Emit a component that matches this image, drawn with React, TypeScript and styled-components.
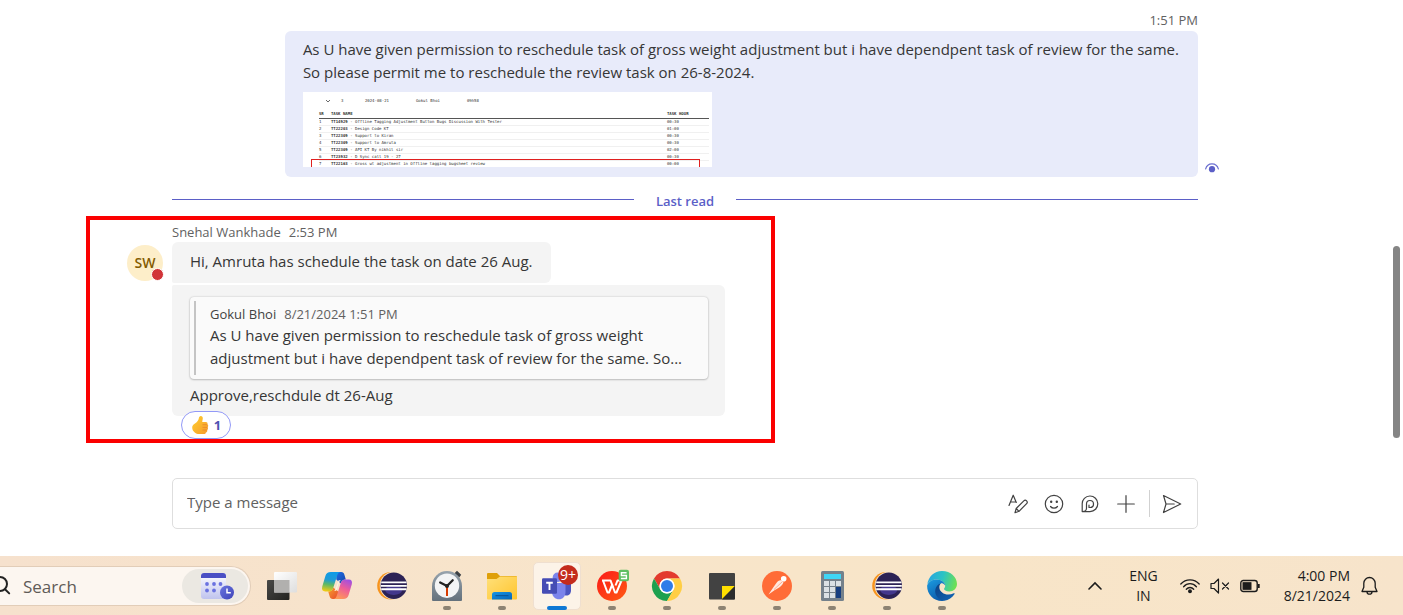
import React from "react";
import styled, { createGlobalStyle } from "styled-components";

const GlobalStyle = createGlobalStyle`
  * { box-sizing: border-box; }
  body {
    margin: 0;
    background: #fff;
    color: #363636;
    font-family: "Open Sans", "Noto Sans", sans-serif;
    font-size: 15px;
    line-height: 23px;
  }
  button, input { font: inherit; color: inherit; }
  p { margin: 0; }
`;

const Page = styled.div`
  min-height: 100vh;
  display: flex;
  flex-direction: column;
`;

const ChatArea = styled.main`
  flex: 1;
  display: flex;
`;

const Conversation = styled.div`
  flex: 1;
  min-width: 0;
  display: flex;
  flex-direction: column;
  padding: 10px 188px 27px 172px;
`;

const ScrollGutter = styled.div`
  width: 17px;
  padding: 246px 3px 0 7px;
`;

const ScrollThumb = styled.div`
  height: 192px;
  border-radius: 4px;
  background: #858585;
`;

const Meta = styled.div<{ $end?: boolean }>`
  display: flex;
  gap: 8px;
  justify-content: ${(p) => (p.$end ? "flex-end" : "flex-start")};
  font-size: 13px;
  line-height: 20px;
  color: #616161;
`;

const Author = styled.span<{ $strong?: boolean }>`
  color: ${(p) => (p.$strong ? "#424242" : "#616161")};
`;

const SentRow = styled.div`
  display: flex;
  justify-content: flex-end;
  align-items: flex-end;
  gap: 7px;
  margin: 1px -21px 0 0;
`;

const SentBubble = styled.article`
  flex: 0 0 calc((100% - 21px) * 0.89);
  padding: 7px 18px 10px;
  border-radius: 6px;
  background: #e8ebfa;
`;

const SeenMark = styled.span`
  display: flex;
  padding-bottom: 4px;
`;

const Snapshot = styled.figure`
  position: relative;
  width: 409px;
  max-width: 100%;
  height: 75px;
  margin: 8px 0 0;
  padding: 6px 3px 0 16px;
  overflow: hidden;
  background: #fff;
  color: #333;
  font-family: "DejaVu Sans Mono", monospace;
  font-size: 4px;
  line-height: 6px;
`;

const SnapshotHead = styled.div`
  display: grid;
  grid-template-columns: 16px 24px 51px 51px 1fr;
  height: 12px;
  padding-left: 6px;
`;

const TaskTable = styled.table`
  width: 100%;
  border-collapse: collapse;
  table-layout: fixed;
  th, td {
    height: 7px;
    padding: 0;
    text-align: left;
    white-space: nowrap;
    border-bottom: 1px solid #f0f0f0;
  }
  th { height: 8px; border-bottom-color: #555; }
  th:first-child { width: 12px; }
  th:last-child { width: 42px; }
`;

const MarkedRow = styled.div`
  position: absolute;
  left: 8px;
  right: 12px;
  top: 67px;
  height: 12px;
  border: 1px solid #e02020;
`;

const LastRead = styled.div`
  display: flex;
  align-items: center;
  gap: 22px;
  height: 20px;
  margin: 14px 0 5px;
  color: #5b5fc7;
  font-size: 13px;
  font-weight: 600;
  line-height: 20px;
  &::before, &::after {
    content: "";
    flex: 1;
    height: 1px;
    margin-bottom: 4px;
    background: #5b5fc7;
  }
`;

const Highlighted = styled.section`
  display: flex;
  align-items: flex-start;
  gap: 9px;
  width: 689px;
  margin-left: -86px;
  padding: 2px 46px 0 37px;
  border: 4px solid #fb0000;
`;

const Avatar = styled.div`
  position: relative;
  flex: none;
  width: 36px;
  height: 36px;
  margin-top: 23px;
  border-radius: 50%;
  background: #fdeec9;
  color: #835b00;
  font-size: 14px;
  font-weight: 600;
  line-height: 36px;
  text-align: center;
`;

const Presence = styled.span`
  position: absolute;
  right: -1px;
  bottom: 0;
  width: 13px;
  height: 13px;
  border: 1px solid #fff;
  border-radius: 50%;
  background: #d13438;
`;

const Received = styled.div`
  flex: 1;
  display: flex;
  flex-direction: column;
  align-items: flex-start;
`;

const Bubble = styled.article<{ $follow?: boolean }>`
  align-self: ${(p) => (p.$follow ? "stretch" : "flex-start")};
  margin-top: ${(p) => (p.$follow ? "2px" : "0")};
  padding: ${(p) => (p.$follow ? "12px 17px 9px 18px" : "8px 18px 10px")};
  border-radius: ${(p) => (p.$follow ? "2px 6px 6px 6px" : "6px 6px 6px 2px")};
  background: #f4f4f4;
`;

const Quote = styled.blockquote`
  display: flex;
  gap: 14px;
  margin: 0 0 5px;
  padding: 4px;
  border-radius: 4px;
  background: #fafafa;
  box-shadow: 0 0 2px rgba(0, 0, 0, 0.22), 0 1px 2px rgba(0, 0, 0, 0.18);
  &::before {
    content: "";
    width: 2px;
    flex: none;
    background: #c4c4c4;
  }
`;

const QuoteBody = styled.div`
  padding: 3px 0 5px;
`;

const Reaction = styled.button`
  display: flex;
  align-items: center;
  justify-content: center;
  gap: 5px;
  width: 50px;
  height: 28px;
  margin: -5px 0 0 9px;
  padding: 0;
  border: 1px solid #9299f7;
  border-radius: 14px;
  background: #fff;
  color: #4f52b2;
  font-size: 13px;
  font-weight: 700;
  line-height: 20px;
`;

const Compose = styled.form`
  display: flex;
  align-items: center;
  height: 51px;
  margin-top: auto;
  padding: 0 15px 0 14px;
  border: 1px solid #dedede;
  border-radius: 5px;
`;

const MessageInput = styled.input`
  flex: 1;
  min-width: 0;
  padding: 0 0 2px;
  border: 0;
  outline: 0;
  background: none;
  &::placeholder { color: #616161; opacity: 1; }
`;

const Tools = styled.div`
  display: flex;
  gap: 16px;
`;

const ToolButton = styled.button`
  display: flex;
  padding: 0;
  border: 0;
  background: none;
  color: #424242;
`;

const Divider = styled.span`
  width: 1px;
  height: 27px;
  margin: 0 12px 0 13px;
  background: #d1d1d1;
`;

const Taskbar = styled.footer`
  display: flex;
  align-items: center;
  height: 59px;
  padding-right: 25px;
  background: linear-gradient(90deg, #f6e1cd 0%, #f8e5ca 45%, #f8e5c8 70%, #f7e4cb 100%);
  color: #1c1c1c;
`;

const SearchBox = styled.div`
  display: flex;
  align-items: center;
  width: 251px;
  height: 40px;
  padding-right: 2px;
  border: 1px solid #e2cdb8;
  border-left: 0;
  border-radius: 0 20px 20px 0;
  background: #fcf6f0;
`;

const SearchInput = styled.input`
  flex: 1;
  min-width: 0;
  padding: 2px 0 0 11px;
  border: 0;
  outline: 0;
  background: none;
  font-size: 17px;
  &::placeholder { color: #5f5b57; opacity: 1; }
`;

const CalendarButton = styled.button`
  display: flex;
  justify-content: center;
  align-items: center;
  width: 66px;
  height: 34px;
  padding: 0;
  border: 0;
  border-radius: 17px;
  background: #ebe8e2;
`;

const Apps = styled.nav`
  display: flex;
  gap: 7px;
  margin-left: 7px;
`;

const AppButton = styled.button<{ $active?: boolean }>`
  position: relative;
  display: flex;
  align-items: center;
  justify-content: center;
  width: 48px;
  height: 48px;
  padding: 0;
  border: 1px solid ${(p) => (p.$active ? "#efdfd0" : "transparent")};
  border-radius: 5px;
  background: ${(p) => (p.$active ? "#fcf3e8" : "none")};
  svg { overflow: visible; }
`;

const Running = styled.span<{ $active?: boolean }>`
  position: absolute;
  bottom: -1px;
  width: ${(p) => (p.$active ? "20px" : "8px")};
  height: 4px;
  border-radius: 2px;
  background: ${(p) => (p.$active ? "#0f78d4" : "#8d8373")};
`;

const Badge = styled.span`
  position: absolute;
  top: 2px;
  right: 2px;
  width: 20px;
  height: 20px;
  border-radius: 50%;
  background: #c42b1c;
  color: #fff;
  font-size: 14px;
  line-height: 19px;
  text-align: center;
`;

const Tray = styled.div`
  display: flex;
  align-items: center;
  margin-left: auto;
  font-size: 14px;
  line-height: 20px;
`;

const TrayButton = styled.button<{ $gap?: number; $right?: boolean }>`
  display: flex;
  flex-direction: column;
  align-items: ${(p) => (p.$right ? "flex-end" : "center")};
  margin-left: ${(p) => p.$gap ?? 0}px;
  padding: 0;
  border: 0;
  background: none;
  white-space: nowrap;
`;

const AppSvg = ({ children }: { children: React.ReactNode }) => (
  <svg width="30" height="30" viewBox="0 0 30 30" aria-hidden="true">{children}</svg>
);

const TaskViewIcon = () => (
  <AppSvg>
    <defs>
      <linearGradient id="tv1" x1="0" y1="0" x2="1" y2="1"><stop stopColor="#4a4a48" /><stop offset="1" stopColor="#22221f" /></linearGradient>
      <linearGradient id="tv2" x1="0" y1="0" x2="1" y2="1"><stop stopColor="#fff" /><stop offset="1" stopColor="#dedede" /></linearGradient>
    </defs>
    <rect x="0" y="9" width="22.5" height="20" rx="1" fill="url(#tv1)" />
    <rect x="7" y="1" width="23" height="20.5" rx="1" fill="url(#tv2)" />
    <rect x="7" y="9" width="15.5" height="12.5" fill="#b1b0ae" />
  </AppSvg>
);

const CopilotIcon = () => (
  <AppSvg>
    <defs>
      <linearGradient id="cp1" x1=".5" y1="0" x2=".35" y2="1"><stop stopColor="#0f9be8" /><stop offset=".4" stopColor="#1f9bd6" /><stop offset=".65" stopColor="#5db865" /><stop offset="1" stopColor="#f2cb13" /></linearGradient>
      <linearGradient id="cp2" x1=".75" y1="0" x2=".3" y2="1"><stop stopColor="#a24fe0" /><stop offset=".45" stopColor="#ee5d98" /><stop offset="1" stopColor="#ff9a55" /></linearGradient>
      <linearGradient id="cp3" x1="0" y1="0" x2="1" y2="1"><stop stopColor="#1c6ee6" /><stop offset="1" stopColor="#1643a8" /></linearGradient>
      <linearGradient id="cp4" x1="0" y1="0" x2="1" y2="1"><stop stopColor="#f6a12c" /><stop offset="1" stopColor="#e8482e" /></linearGradient>
    </defs>
    <path d="M14 1h5.200c1.800 0 2.700 1 3.200 2.700L23.800 8.600c-2.800 0-4.300 1.200-5 4l-4.500-4z" fill="url(#cp3)" />
    <path d="M16.500 28h-5.700c-1.800 0-2.700-1-3.200-2.700L6.200 20.400c2.800 0 4.300-1.200 5-4l5 4z" fill="url(#cp4)" />
    <path d="M8.800 1h9.500c-1.800.3-2.600 1.700-3.300 3.900l-3.700 11.800c-.9 2.700-2.300 3.800-4.900 3.800H3.200C.6 20.500-.5 18.600.2 15.800L3.300 5.200C4.200 2.200 5.800 1 8.800 1z" fill="url(#cp1)" />
    <path d="M21.200 28h-9.500c1.800-.3 2.600-1.700 3.300-3.900l3.700-11.800c.9-2.700 2.300-3.800 4.900-3.800h3.200c2.600 0 3.700 1.900 3 4.700l-3.100 10.600c-.9 3-2.500 4.200-5.500 4.200z" fill="url(#cp2)" />
    <path d="M16.600 9.200h2.200c-1.200.7-1.800 2-2.300 3.600l-2.300 7h-2c1-.7 1.500-1.800 2-3.200z" fill="#fff3e4" />
  </AppSvg>
);

const EclipseIcon = () => (
  <AppSvg>
    <circle cx="14" cy="14.700" r="13.800" fill="#f7941e" />
    <circle cx="16.600" cy="14.700" r="13.900" fill="#f8e5ca" />
    <circle cx="16.800" cy="14.700" r="13.200" fill="#2c2255" />
    <ellipse cx="16.700" cy="19" rx="8.500" ry="5" fill="#43378c" />
    <path d="M4.200 11.400h25.300M3.800 14.900h26M4.200 18.300h25.300" stroke="#fff" strokeWidth="1.900" />
  </AppSvg>
);

const ClockIcon = () => (
  <AppSvg>
    <defs><linearGradient id="ck" x1="0" y1="0" x2="0" y2="1"><stop stopColor="#97a3ad" /><stop offset="1" stopColor="#64717c" /></linearGradient></defs>
    <path d="M22.500 2.200l2.500-2.400 4.200 4-2 2.700z" fill="#3b4045" />
    <path d="M0 15a15 15 0 0 1 30 0v14a1 1 0 0 1-1 1H1a1 1 0 0 1-1-1z" fill="url(#ck)" />
    <circle cx="15" cy="14.700" r="12.200" fill="#f3f4f5" />
    <path d="M15 15L8.200 11.500M15 15l5.700-5.700" stroke="#222" strokeWidth="2.300" strokeLinecap="round" />
    <path d="M15 16v9" stroke="#d83b01" strokeWidth="2" />
    <circle cx="15" cy="15" r="2" fill="#222" />
  </AppSvg>
);

const FolderIcon = () => (
  <AppSvg>
    <defs>
      <linearGradient id="fd1" x1="0" y1="0" x2="1" y2="1"><stop stopColor="#ffe07a" /><stop offset="1" stopColor="#ffc52e" /></linearGradient>
      <linearGradient id="fd2" x1="0" y1="0" x2="1" y2="1"><stop stopColor="#1595e3" /><stop offset="1" stopColor="#0665b8" /></linearGradient>
    </defs>
    <path d="M0 3a1 1 0 0 1 1-1h9l3 3h16a1 1 0 0 1 1 1v6H0z" fill="#dfa009" />
    <path d="M0 8h9.500L13 5.500h17V27.500a1 1 0 0 1-1 1H1a1 1 0 0 1-1-1z" fill="url(#fd1)" />
    <path d="M5 28.500V23.500a2.500 2.500 0 0 1 2.500-2.500h15a2.500 2.500 0 0 1 2.500 2.500v5z" fill="url(#fd2)" />
    <path d="M8.500 24.700h13" stroke="#0a4f8f" strokeWidth="1" />
  </AppSvg>
);

const TeamsIcon = () => (
  <AppSvg>
    <circle cx="25" cy="6" r="3.500" fill="#5059c9" />
    <path d="M20 11h9v8.500c0 3-2 5-4.500 5S20 22.500 20 19.500z" fill="#4c55c0" />
    <circle cx="15.500" cy="6.300" r="4.800" fill="#7b83eb" />
    <path d="M10 12h13.500v9c0 4.500-2.800 7.300-6.500 7.300S10 25.500 10 21z" fill="#7b83eb" />
    <rect x="0" y="7.300" width="15" height="15.500" rx="1.200" fill="#454cb5" />
    <path d="M4.200 11.700h6.600M7.500 11.700v7.300" stroke="#fff" strokeWidth="1.900" />
  </AppSvg>
);

const WpsIcon = () => (
  <AppSvg>
    <defs><linearGradient id="wp" x1="0" y1="0" x2="1" y2="1"><stop stopColor="#fb1a1a" /><stop offset="1" stopColor="#ff5a12" /></linearGradient></defs>
    <circle cx="15" cy="15" r="15" fill="url(#wp)" />
    <path d="M5 9.500h8.500l3 7.500M6 9.500l4.500 12h1.500L15.500 13M13.500 9.500L18 21.500h1.500L24.500 9.500h-4l-2 5" fill="none" stroke="#fff" strokeWidth="2" strokeLinejoin="round" />
    <rect x="21.700" y="-1.300" width="10.300" height="11.500" rx="2" fill="#5fbf62" />
    <path d="M29.600 1.700h-5.200v2.800h5v3h-5.500" fill="none" stroke="#fff" strokeWidth="1.400" />
  </AppSvg>
);

const ChromeIcon = () => (
  <AppSvg>
    <path d="M2 7.500A15 15 0 0 1 28 7.500H15A7.500 7.500 0 0 0 8.500 18.700z" fill="#e33b2e" />
    <path d="M2 7.500L8.500 18.700a7.500 7.500 0 0 0 13 0L15 30A15 15 0 0 1 2 7.500z" fill="#1da04f" />
    <path d="M15 7.500h13A15 15 0 0 1 15 30l6.500-11.200A7.500 7.500 0 0 0 15 7.500z" fill="#ffce44" />
    <circle cx="15" cy="15" r="7.600" fill="#fff" />
    <circle cx="15" cy="15" r="6" fill="#2f7ce8" />
  </AppSvg>
);

const StickyIcon = () => (
  <AppSvg>
    <rect x="2" y="2" width="26" height="26.500" rx="1" fill="#424242" />
    <path d="M15 15h13L15 28z" fill="#ffdf00" />
    <path d="M28 15v12.500a1 1 0 0 1-1 1H15z" fill="#2c2c2c" />
  </AppSvg>
);

const PostmanIcon = () => (
  <AppSvg>
    <circle cx="15" cy="15" r="15" fill="#ff6c37" />
    <circle cx="21.700" cy="7.700" r="2.800" fill="#fff" />
    <path d="M19.700 9.500c-2-.7-4 .6-5.500 2.700l-3 4.200L6.500 23.500 12.500 19.300l4.800-2.800c2.600-1.800 4.200-4.200 4.200-5.700z" fill="#ffe9e0" />
    <path d="M20.500 10.500L12 18.500" stroke="#ff9c78" strokeWidth=".8" />
  </AppSvg>
);

const CalculatorIcon = () => (
  <AppSvg>
    <rect x="4" y="0" width="23" height="30" rx="1.500" fill="#75818b" />
    <rect x="7" y="3" width="17" height="5" fill="#3fd5f5" />
    {[10, 16, 22].map((y) => [7, 13, 19].map((x) => <rect key={x + "-" + y} x={x} y={y} width="5" height="5" fill="#dbe1e5" />))}
    <rect x="19" y="16" width="5" height="11" fill="#173f80" />
  </AppSvg>
);

const EdgeIcon = () => (
  <AppSvg>
    <defs>
      <linearGradient id="ed1" x1="0" y1=".3" x2="1" y2=".5"><stop stopColor="#2aa5e0" /><stop offset=".5" stopColor="#2cc3c4" /><stop offset="1" stopColor="#6fe052" /></linearGradient>
      <linearGradient id="ed2" x1="0" y1="0" x2=".5" y2="1"><stop stopColor="#1b9de2" /><stop offset="1" stopColor="#0c5cab" /></linearGradient>
      <linearGradient id="ed3" x1="0" y1="0" x2="1" y2="1"><stop stopColor="#0a3f82" /><stop offset="1" stopColor="#1267b8" /></linearGradient>
    </defs>
    <path d="M.3 13.500C1.200 5.800 7.300 0 15 0c8.800 0 15 6.200 15 13 0 4.500-3.500 7.400-7.700 7.400-3.300 0-5.300-1.300-5.300-2.400 0-.8 1.200-1.400 1.200-3.300C18.200 11.300 14 8.500 9.500 8.500 5 8.500 1.500 11 .3 13.500z" fill="url(#ed1)" />
    <path d="M.1 14.700C1.300 10.500 5.200 8.500 9.500 8.500c4.800 0 8.500 2.800 8.700 6-1-1.600-2.500-2.200-4.200-2.200-3 2.400-4.500 6-3.700 10 .6 3.600 3.600 6.400 7 7.500C7.500 31 0 24 .1 14.700z" fill="url(#ed2)" />
    <path d="M14 12.300c-4.500 1.400-6.500 6-5.500 10.200 1 4 4.700 7.300 8.800 7.300 4.300-.8 8-3.300 10.300-6.800.3-.6-.2-1-.8-.7-7 3.100-14-.3-14.400-5.600-.2-2 .5-3.600 1.600-4.400z" fill="url(#ed3)" />
  </AppSvg>
);

const apps = [
  { name: "Task view", Icon: TaskViewIcon, running: false },
  { name: "Copilot", Icon: CopilotIcon, running: false },
  { name: "Eclipse", Icon: EclipseIcon, running: false },
  { name: "Clock", Icon: ClockIcon, running: true },
  { name: "File Explorer", Icon: FolderIcon, running: true },
  { name: "Teams", Icon: TeamsIcon, running: true, active: true, badge: "9+" },
  { name: "WPS Office", Icon: WpsIcon, running: true },
  { name: "Chrome", Icon: ChromeIcon, running: true },
  { name: "Sticky Notes", Icon: StickyIcon, running: true },
  { name: "Postman", Icon: PostmanIcon, running: true },
  { name: "Calculator", Icon: CalculatorIcon, running: true },
  { name: "Eclipse workspace", Icon: EclipseIcon, running: true },
  { name: "Edge", Icon: EdgeIcon, running: true },
];

const tasks = [
  ["TT14929", "Offline Tagging Adjustment Button Bugs Discussion With Tester", "00:30"],
  ["TT22203", "Design Code KT", "01:00"],
  ["TT22309", "Support to Kiran", "00:30"],
  ["TT22309", "Support to Amruta", "00:30"],
  ["TT22309", "API KT By nikhil sir", "02:00"],
  ["TT23932", "D Sync call 19 - 27", "00:30"],
  ["TT22163", "Gross wt adjustment in Offline tagging bugsheet review", "00:00"],
];

const ThumbIcon = () => (
  <svg width="18" height="20" viewBox="0 0 18 20" aria-hidden="true">
    <defs><linearGradient id="th" x1="0" y1="0" x2="1" y2="1"><stop stopColor="#ffd02e" /><stop offset="1" stopColor="#f59a2c" /></linearGradient></defs>
    <path d="M9.200 1.200c1.500-.5 2.800.6 2.600 2.400L11.200 7h3.600c1.500 0 2.200 1.200 1.600 2.300 1.100.7 1.100 2.200.2 2.900.7.900.5 2.100-.4 2.700.4 1.100-.2 2.200-1.300 2.500-.1 1.100-1 1.600-2.200 1.600H8.200c-2 0-3.200-.5-4.200-1.300C2.200 16.400 1.200 14.800 1.200 12.600c0-2 1.100-3.300 2.800-4.200C6.500 7 7.700 5.100 8 2.600c.1-.8.500-1.200 1.200-1.400z" fill="url(#th)" />
    <path d="M11.500 9.700h4.800M11.500 12.400h5M11.500 15h4.300" stroke="#e57f2a" strokeWidth=".7" />
  </svg>
);

const LineSvg = ({ children }: { children: React.ReactNode }) => (
  <svg width="20" height="20" viewBox="0 0 20 20" fill="none" stroke="currentColor" strokeWidth="1.200" strokeLinecap="round" strokeLinejoin="round" aria-hidden="true">{children}</svg>
);

export default function App() {
  return (
    <Page>
      <GlobalStyle />
      <ChatArea>
        <Conversation>
          <Meta $end><time>1:51 PM</time></Meta>
          <SentRow>
            <SentBubble>
              <p>As U have given permission to reschedule task of gross weight adjustment but i have dependpent task of review for the same.</p>
              <p>So please permit me to reschedule the review task on 26-8-2024.</p>
              <Snapshot>
                <SnapshotHead>
                  <svg width="6" height="6" viewBox="0 0 6 6" aria-hidden="true"><path d="M1 2l2 2 2-2" fill="none" stroke="#444" strokeWidth=".8" /></svg>
                  <span>3</span><span>2024-08-21</span><span>Gokul Bhoi</span><span>09h58</span>
                </SnapshotHead>
                <TaskTable>
                  <thead><tr><th>SR</th><th>TASK NAME</th><th>TASK HOUR</th></tr></thead>
                  <tbody>
                    {tasks.map(([id, name, hours], i) => (
                      <tr key={i}><td>{i + 1}</td><td><b>{id}</b> - {name}</td><td>{hours}</td></tr>
                    ))}
                  </tbody>
                </TaskTable>
                <MarkedRow />
              </Snapshot>
            </SentBubble>
            <SeenMark>
              <svg width="14" height="10" viewBox="0 0 14 10" role="img" aria-label="Seen">
                <path d="M.6 6C1.500 2.700 4 .9 7 .9S12.500 2.700 13.400 6" fill="none" stroke="#6a6ed0" strokeWidth="1.100" strokeLinecap="round" />
                <circle cx="7" cy="6.200" r="3.100" fill="#5b5fc7" />
              </svg>
            </SeenMark>
          </SentRow>
          <LastRead>Last read</LastRead>
          <Highlighted>
            <Avatar>SW<Presence /></Avatar>
            <Received>
              <Meta><Author>Snehal Wankhade</Author><time>2:53 PM</time></Meta>
              <Bubble><p>Hi, Amruta has schedule the task on date 26 Aug.</p></Bubble>
              <Bubble $follow>
                <Quote>
                  <QuoteBody>
                    <Meta><Author $strong>Gokul Bhoi</Author><time>8/21/2024 1:51 PM</time></Meta>
                    <p>As U have given permission to reschedule task of gross weight adjustment but i have dependpent task of review for the same. So...</p>
                  </QuoteBody>
                </Quote>
                <p>Approve,reschdule dt 26-Aug</p>
              </Bubble>
              <Reaction type="button" aria-label="1 like"><ThumbIcon />1</Reaction>
            </Received>
          </Highlighted>
          <Compose>
            <MessageInput aria-label="Type a message" placeholder="Type a message" />
            <Tools>
              <ToolButton type="button" aria-label="Format">
                <LineSvg><path d="M1 11.500L5.200 1.200 8.300 8.500M2.600 8h5M7 18.700l1.200-4.200 7.600-7.600a1.900 1.900 0 0 1 2.800 2.800L11 17.300 7 18.700zM8.200 14.500L11 17.300" /></LineSvg>
              </ToolButton>
              <ToolButton type="button" aria-label="Emoji">
                <LineSvg><circle cx="10" cy="10" r="8.700" /><path d="M6.500 12.500c1.800 2.200 5.200 2.200 7 0" /><circle cx="7.200" cy="7.800" r=".6" fill="currentColor" /><circle cx="12.800" cy="7.800" r=".6" fill="currentColor" /></LineSvg>
              </ToolButton>
              <ToolButton type="button" aria-label="Loop components">
                <LineSvg><path d="M2.200 17.600V10A7.800 7.800 0 1 1 10 17.600zM2.500 17.500c3 0 4-1.200 4-3.500V10a3.500 3.500 0 1 1 3.700 3.500H9V11" /></LineSvg>
              </ToolButton>
              <ToolButton type="button" aria-label="More actions">
                <LineSvg><path d="M10 1.700v16.600M1.700 10h16.600" /></LineSvg>
              </ToolButton>
            </Tools>
            <Divider />
            <ToolButton type="submit" aria-label="Send">
              <LineSvg><path d="M1.500 1.500L18.700 10 1.500 18.500 4 10zM4.200 10h8" /></LineSvg>
            </ToolButton>
          </Compose>
        </Conversation>
        <ScrollGutter><ScrollThumb /></ScrollGutter>
      </ChatArea>
      <Taskbar>
        <SearchBox>
          <svg width="12" height="24" viewBox="0 0 12 24" fill="none" stroke="#222" strokeWidth="2" strokeLinecap="round" aria-hidden="true"><circle cx="0" cy="10" r="7" /><path d="M5 15.200l4.200 4.200" /></svg>
          <SearchInput aria-label="Search" placeholder="Search" />
          <CalendarButton type="button" aria-label="Calendar">
            <svg width="38" height="28" viewBox="-4 0 38 28" aria-hidden="true">
              <defs>
                <linearGradient id="cal" x1="0" y1="0" x2="0" y2="1"><stop stopColor="#fff" /><stop offset="1" stopColor="#bfc3ee" /></linearGradient>
                <linearGradient id="clk" x1="0" y1="0" x2="1" y2="1"><stop stopColor="#6a75e0" /><stop offset="1" stopColor="#3d43b8" /></linearGradient>
              </defs>
              <rect x="1" y="1" width="25" height="26" rx="3" fill="url(#cal)" />
              <path d="M1 6V4a3 3 0 0 1 3-3h19a3 3 0 0 1 3 3v2z" fill="#4a4fc4" />
              {[[7, 12], [14, 12], [20.500, 12], [7, 18.500], [14, 18.500]].map(([x, y], i) => <circle key={i} cx={x} cy={y} r="1.900" fill="#6a72e0" />)}
              <circle cx="27" cy="20.500" r="7" fill="url(#clk)" />
              <path d="M27 16.500v4.300h3.800" fill="none" stroke="#fff" strokeWidth="1.500" />
            </svg>
          </CalendarButton>
        </SearchBox>
        <Apps>
          {apps.map(({ name, Icon, running, active, badge }) => (
            <AppButton key={name} type="button" aria-label={name} $active={active}>
              <Icon />
              {badge && <Badge>{badge}</Badge>}
              {running && <Running $active={active} />}
            </AppButton>
          ))}
        </Apps>
        <Tray>
          <TrayButton type="button" aria-label="Hidden icons">
            <svg width="14" height="9" viewBox="0 0 14 9" fill="none" stroke="#1c1c1c" strokeWidth="1.600" strokeLinecap="round" aria-hidden="true"><path d="M1 8l6-6 6 6" /></svg>
          </TrayButton>
          <TrayButton type="button" $gap={27}><span>ENG</span><span>IN</span></TrayButton>
          <TrayButton type="button" aria-label="Network" $gap={22}>
            <svg width="20" height="16" viewBox="0 0 20 16" fill="none" stroke="#1c1c1c" strokeWidth="1.300" strokeLinecap="round" aria-hidden="true"><path d="M.8 6c5-5.600 13.400-5.600 18.400 0M3.600 8.700c3.600-4 9.200-4 12.800 0M6.300 11.200c2.100-2.300 5.300-2.300 7.400 0" /><circle cx="10" cy="13.300" r="1.300" fill="#1c1c1c" /></svg>
          </TrayButton>
          <TrayButton type="button" aria-label="Muted" $gap={10}>
            <svg width="20" height="16" viewBox="0 0 20 16" fill="none" stroke="#1c1c1c" strokeWidth="1.200" strokeLinecap="round" strokeLinejoin="round" aria-hidden="true"><path d="M1 5.500v5h3L8.500 15V1L4 5.500zM12.500 5l6 6M18.500 5l-6 6" /></svg>
          </TrayButton>
          <TrayButton type="button" aria-label="Battery" $gap={10}>
            <svg width="20" height="14" viewBox="0 0 20 14" fill="none" stroke="#1c1c1c" aria-hidden="true"><rect x=".8" y="1.500" width="16.400" height="11" rx="2.500" strokeWidth="1.400" /><rect x="3" y="3.700" width="8" height="6.600" fill="#1c1c1c" /><path d="M18.700 5v4" strokeWidth="2" /></svg>
          </TrayButton>
          <TrayButton type="button" $gap={24} $right><span>4:00 PM</span><span>8/21/2024</span></TrayButton>
          <TrayButton type="button" aria-label="Notifications" $gap={11}>
            <svg width="17" height="20" viewBox="0 0 17 20" fill="none" stroke="#1c1c1c" strokeWidth="1.300" strokeLinejoin="round" aria-hidden="true"><path d="M8.500 1.500a5.700 5.700 0 0 0-5.700 5.700v4L1 15.500h15l-1.800-4.300v-4a5.700 5.700 0 0 0-5.700-5.700zM6 15.700a2.500 2.500 0 0 0 5 0" /></svg>
          </TrayButton>
        </Tray>
      </Taskbar>
    </Page>
  );
}
